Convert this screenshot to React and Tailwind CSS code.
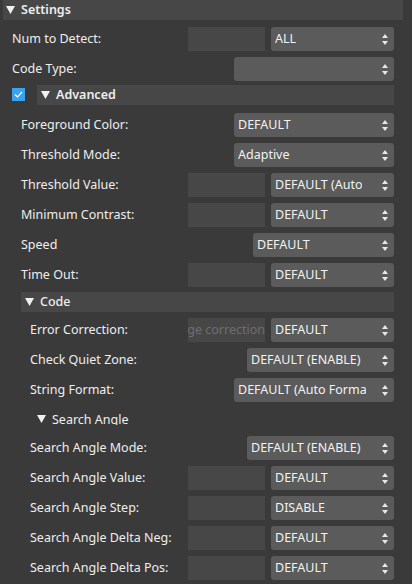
import React from 'react'

const Tri = () => (
  <svg width="9" height="8" viewBox="0 0 9 8" className="shrink-0">
    <path d="M0 0 L9 0 L4.5 8 Z" fill="#f0f0f0" />
  </svg>
)

const Arrows = () => (
  <svg width="6" height="11" viewBox="0 0 6 11" className="shrink-0">
    <path d="M3 0 L6 4 L0 4 Z" fill="#e8e8e8" />
    <path d="M3 11 L6 7 L0 7 Z" fill="#e8e8e8" />
  </svg>
)

const Select = ({ value, x }) => (
  <div
    className={`h-6 rounded-[3px] bg-[#5b5b5b] flex items-center justify-between pl-[4px] pr-[6px] text-[#f2f2f2] overflow-hidden ${x}`}
  >
    <span className="whitespace-nowrap overflow-hidden max-w-[128px]">{value}</span>
    <Arrows />
  </div>
)

const TextBox = ({ placeholder }) => (
  <div className="w-[77px] h-6 bg-[#474747] flex items-center justify-end overflow-hidden whitespace-nowrap text-[#6e6e6e]">
    {placeholder}
  </div>
)

const Row = ({ label, indent, children }) => (
  <div className="h-[30px] flex items-center">
    <div className={`flex-1 whitespace-nowrap ${indent}`}>{label}</div>
    <div className="flex items-center gap-[6px] pr-[18px]">{children}</div>
  </div>
)

const Header = ({ title, weight }) => (
  <div className={`h-5 bg-[#474747] flex items-center gap-[6px] pl-[4px] ${weight}`}>
    <Tri />
    <span>{title}</span>
  </div>
)

export default function App() {
  return (
    <div
      className="w-[412px] h-[584px] bg-[#3a3a3a] text-[#eeeeee] text-[12.5px] overflow-hidden"
      style={{ fontFamily: '"Noto Sans", "Open Sans", sans-serif' }}
    >
      <div className="pl-[3px] pr-[9px]">
        <div className="h-5 bg-[#474747] flex items-center gap-[6px] pl-[3px] font-semibold">
          <Tri />
          <span>Settings</span>
        </div>
      </div>
      <div className="pt-[4px]">
        <Row label="Num to Detect:" indent="pl-[12px]">
          <TextBox />
          <Select value="ALL" x="w-[123px]" />
        </Row>
        <Row label="Code Type:" indent="pl-[12px]">
          <Select value="" x="w-[160px]" />
        </Row>
        <div className="h-[26px] flex items-start pt-[1px] pr-[18px]">
          <div className="w-[37px] flex pl-[12px] pt-[3px]">
            <div className="w-[13px] h-[13px] bg-[#3ba3ee] flex items-center justify-center">
              <svg width="9" height="7" viewBox="0 0 9 7">
                <path d="M1 3.5 L3.5 6 L8 1" stroke="white" strokeWidth="1.2" fill="none" />
              </svg>
            </div>
          </div>
          <div className="flex-1">
            <Header title="Advanced" weight="font-semibold" />
          </div>
        </div>
        <Row label="Foreground Color:" indent="pl-[21px]">
          <Select value="DEFAULT" x="w-[160px]" />
        </Row>
        <Row label="Threshold Mode:" indent="pl-[21px]">
          <Select value="Adaptive" x="w-[160px]" />
        </Row>
        <Row label="Threshold Value:" indent="pl-[21px]">
          <TextBox />
          <Select value="DEFAULT (Auto" x="w-[123px]" />
        </Row>
        <Row label="Minimum Contrast:" indent="pl-[21px]">
          <TextBox />
          <Select value="DEFAULT" x="w-[123px]" />
        </Row>
        <Row label="Speed" indent="pl-[21px]">
          <Select value="DEFAULT" x="w-[141px]" />
        </Row>
        <Row label="Time Out:" indent="pl-[21px]">
          <TextBox />
          <Select value="DEFAULT" x="w-[123px]" />
        </Row>
        <div className="h-[25px] pt-[2px] pl-[21px] pr-[18px]">
          <Header title="Code" weight="font-medium" />
        </div>
        <Row label="Error Correction:" indent="pl-[30px]">
          <TextBox placeholder="ge correction" />
          <Select value="DEFAULT" x="w-[123px]" />
        </Row>
        <Row label="Check Quiet Zone:" indent="pl-[30px]">
          <Select value="DEFAULT (ENABLE)" x="w-[147px]" />
        </Row>
        <Row label="String Format:" indent="pl-[30px]">
          <Select value="DEFAULT (Auto Format)" x="w-[160px]" />
        </Row>
        <div className="h-[28px] pt-[7px]">
          <div className="h-[13px] overflow-hidden flex items-start gap-[6px] pl-[37px] pt-[3px]">
            <Tri />
            <span className="leading-[14px] -mt-[2px]">Search Angle</span>
          </div>
        </div>
        <Row label="Search Angle Mode:" indent="pl-[30px]">
          <Select value="DEFAULT (ENABLE)" x="w-[147px]" />
        </Row>
        <Row label="Search Angle Value:" indent="pl-[30px]">
          <TextBox />
          <Select value="DEFAULT" x="w-[123px]" />
        </Row>
        <Row label="Search Angle Step:" indent="pl-[30px]">
          <TextBox />
          <Select value="DISABLE" x="w-[123px]" />
        </Row>
        <Row label="Search Angle Delta Neg:" indent="pl-[30px]">
          <TextBox />
          <Select value="DEFAULT" x="w-[123px]" />
        </Row>
        <Row label="Search Angle Delta Pos:" indent="pl-[30px]">
          <TextBox />
          <Select value="DEFAULT" x="w-[123px]" />
        </Row>
        <div className="h-[2px] mt-[1px] ml-[3px] mr-[7px] bg-[#5a5a5a]" />
      </div>
    </div>
  )
}
